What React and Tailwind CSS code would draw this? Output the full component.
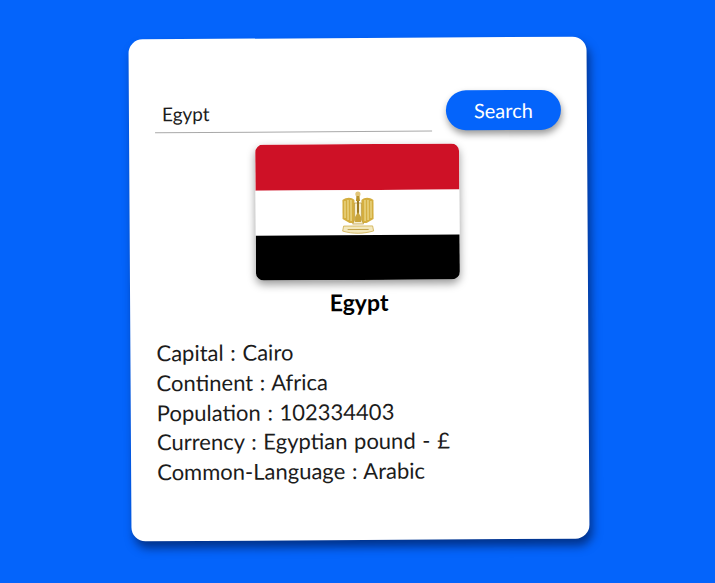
import React from 'react';

const FONT = { comic: 'font-["Comic_Sans_MS","Lato","Open_Sans",sans-serif]' };

const DETAILS = [
    ['Capital', 'Cairo'],
    ['Continent', 'Africa'],
    ['Population', '102334403'],
    ['Currency', 'Egyptian pound - £'],
    ['Common-Language', 'Arabic'],
];

// Eagle of Saladin, small and simplified
const Emblem = () => (
    <svg width="33" height="45" viewBox="0 0 33 45">
        <path d="M1 10 C5 7 10 7 13 10 L13 33 L8 33 L1 29 Z" fill="#d4ae3f" />
        <path d="M32 10 C28 7 23 7 20 10 L20 33 L25 33 L32 29 Z" fill="#d4ae3f" />
        <path d="M3.5 11 V28 M6.5 10 V30 M9.5 10 V31 M29.5 11 V28 M26.5 10 V30 M23.5 10 V31" stroke="#ecd98a" strokeWidth="1.3" />
        <path d="M13 13 H20 V30 L22 34 H11 L13 30 Z" fill="#f6efd2" stroke="#b8922a" strokeWidth="0.7" />
        <path d="M15.5 10 H17.5 V24 H15.5 Z" fill="#9c7a22" />
        <path d="M13.5 27 L16.5 22 L19.5 27 V32 H13.5 Z" fill="#c9a53c" />
        <circle cx="16.5" cy="4" r="2.6" fill="#e3c67a" />
        <path d="M15 6 H18 L18.5 11 H14.5 Z" fill="#b8922a" />
        <path d="M2 36 H31 L32 41 C22 44 11 44 1 41 Z" fill="#f3e8bd" stroke="#cfae4a" strokeWidth="0.8" />
        <path d="M6 39.5 H27" stroke="#b8922a" strokeWidth="0.8" />
    </svg>
);

const App = () => (
    <div className={`w-[715px] h-[583px] bg-[#0464fb] flex items-center justify-center overflow-hidden ${FONT.comic}`}>
        <div className="w-[458px] h-[502px] mt-[-6px] ml-[3px] -rotate-[0.35deg] bg-white rounded-[14px] shadow-[3px_7px_10px_rgba(0,25,80,0.65)] pt-[53px] px-[26px] flex flex-col">
            <div className="flex items-start">
                <div className="w-[277px] h-[40px] mt-[1px] border-b border-[#a9a9a9] pl-[7px] pt-[4px] flex items-center text-[19px] text-[#1c1c1c]">
                    Egypt
                </div>
                <button className="ml-[14px] w-[115px] h-[40px] rounded-full bg-[#0464fb] text-white text-[20px] shadow-[1px_4px_7px_rgba(0,0,0,0.4)]">
                    Search
                </button>
            </div>

            <div className="mt-[12px] ml-[-2px] self-center w-[204px] h-[136px] rounded-[8px] overflow-hidden shadow-[0_4px_8px_rgba(0,0,0,0.4)] flex flex-col">
                <div className="h-[46px] bg-[#ce1126]" />
                <div className="h-[45px] bg-white flex items-center justify-center">
                    <Emblem />
                </div>
                <div className="flex-1 bg-black" />
            </div>

            <h2 className="mt-[8px] text-center text-[23px] font-bold leading-[28px] text-black">Egypt</h2>

            <div className="mt-[21px] text-[22px] leading-[29.8px] text-[#1c1c1c] [word-spacing:1px]">
                {DETAILS.map(([label, value]) => (
                    <p key={label}>{label} : {value}</p>
                ))}
            </div>
        </div>
    </div>
);

export default App;
